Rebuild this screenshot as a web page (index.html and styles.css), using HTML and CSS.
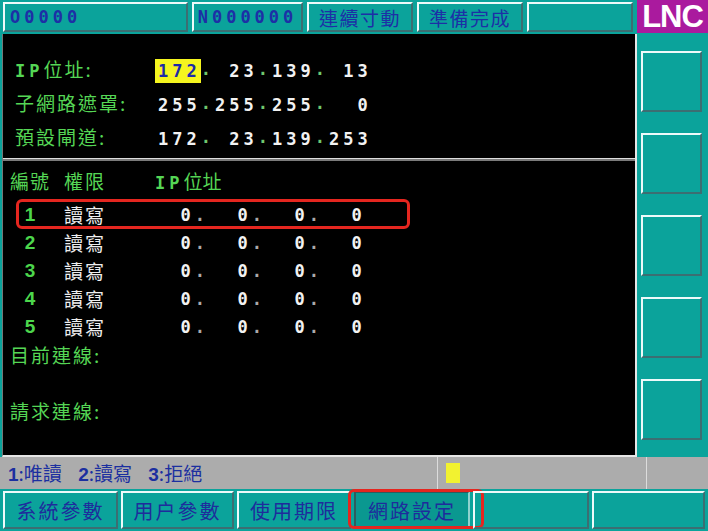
FILE: index.html
```html
<!doctype html>
<html>
<head>
<title>LNC | 網路設定</title>
<link rel="stylesheet" href="styles.css">
</head>
<body>
<div class="screen">
    <header class="topbar">
        <div class="cell cell-prog mono">O0000</div>
        <div class="cell cell-seq mono">N000000</div>
        <div class="cell cell-mode">連續寸動</div>
        <div class="cell cell-mode">準備完成</div>
        <div class="cell cell-mode"></div>
        <div class="logo">LNC</div>
    </header>

    <div class="middle">
        <div class="panel">
            <section class="net">
                <div class="net-row">
                    <span class="label"><b class="ip">IP</b>位址:</span>
                    <span class="addr"><span class="cursor">172</span><i>.</i> 23<i>.</i>139<i>.</i> 13</span>
                </div>
                <div class="net-row">
                    <span class="label">子網路遮罩:</span>
                    <span class="addr">255<i>.</i>255<i>.</i>255<i>.</i>  0</span>
                </div>
                <div class="net-row">
                    <span class="label">預設閘道:</span>
                    <span class="addr">172<i>.</i> 23<i>.</i>139<i>.</i>253</span>
                </div>
            </section>

            <section class="users">
                <div class="users-head">
                    <span class="col-no">編號</span>
                    <span class="col-right">權限</span>
                    <span class="col-ip"><b class="ip">IP</b>位址</span>
                </div>
                <div class="user-list">
                    <div class="user-row marked"><span class="col-no num">1</span><span class="col-right">讀寫</span><span class="col-ip addr">  0<i>.</i>  0<i>.</i>  0<i>.</i>  0</span></div>
                    <div class="user-row"><span class="col-no num">2</span><span class="col-right">讀寫</span><span class="col-ip addr">  0<i>.</i>  0<i>.</i>  0<i>.</i>  0</span></div>
                    <div class="user-row"><span class="col-no num">3</span><span class="col-right">讀寫</span><span class="col-ip addr">  0<i>.</i>  0<i>.</i>  0<i>.</i>  0</span></div>
                    <div class="user-row"><span class="col-no num">4</span><span class="col-right">讀寫</span><span class="col-ip addr">  0<i>.</i>  0<i>.</i>  0<i>.</i>  0</span></div>
                    <div class="user-row"><span class="col-no num">5</span><span class="col-right">讀寫</span><span class="col-ip addr">  0<i>.</i>  0<i>.</i>  0<i>.</i>  0</span></div>
                </div>
                <div class="conn">目前連線:</div>
                <div class="conn conn-req">請求連線:</div>
            </section>
        </div>

        <aside class="side">
            <div class="key"></div>
            <div class="key"></div>
            <div class="key"></div>
            <div class="key"></div>
            <div class="key"></div>
        </aside>
    </div>

    <div class="status">
        <div class="hint">
            <span class="opt"><b>1</b>:唯讀</span>
            <span class="opt"><b>2</b>:讀寫</span>
            <span class="opt"><b>3</b>:拒絕</span>
        </div>
        <div class="input"><span class="caret"></span></div>
        <div class="spare"></div>
    </div>

    <nav class="tabs">
        <div class="tab">系統參數</div>
        <div class="tab">用户參數</div>
        <div class="tab">使用期限</div>
        <div class="tab active marked">網路設定</div>
        <div class="tab"></div>
        <div class="tab"></div>
    </nav>
</div>
</body>
</html>
```

FILE: styles.css
```css
html, body
{
    margin:0;
}
body
{
    width:708px;
    height:531px;
    overflow:hidden;
    background:#0ba39b;
    font-family:"Noto Sans CJK TC", "Noto Sans", sans-serif;
}
.screen
{
    display:flex;
    flex-direction:column;
    height:531px;
}
.mono
{
    font-family:"DejaVu Sans Mono", monospace;
    font-weight:bold;
    font-size:17px;
    letter-spacing:4px;
}

/* top status strip */
.topbar
{
    display:flex;
    gap:4px;
    height:34px;
    padding-left:3px;
}
.cell
{
    box-sizing:border-box;
    height:30px;
    margin:2px 0;
    border:2px solid;
    border-color:#eefafa #3c6e72 #3c6e72 #eefafa;
    display:flex;
    align-items:center;
    justify-content:center;
    color:#1d2fa6;
    font-size:19px;
    letter-spacing:1.5px;
}
.cell-prog
{
    width:185px;
    justify-content:flex-start;
    padding-left:5px;
}
.cell-seq
{
    width:111px;
}
.cell-mode
{
    width:106px;
}
.cell.mono
{
    font-size:17px;
    letter-spacing:4px;
}
.logo
{
    width:71px;
    height:33px;
    background:#aa1a9e;
    color:#fff;
    font:bold 31px/33px "Liberation Sans", sans-serif;
    letter-spacing:-1px;
    text-align:center;
}

/* main area */
.middle
{
    display:flex;
    height:423px;
}
.panel
{
    box-sizing:border-box;
    width:635px;
    margin-left:2px;
    background:#000;
    border-left:1px solid #777;
    border-right:2px solid #e6e6e6;
    border-bottom:2px solid #e6e6e6;
    display:flex;
    flex-direction:column;
}
.side
{
    flex:1;
    display:flex;
    flex-direction:column;
    gap:21px;
    padding:17px 0 0 4px;
}
.key
{
    box-sizing:border-box;
    width:61px;
    height:61px;
    border:2px solid;
    border-color:#eefafa #3c6e72 #3c6e72 #eefafa;
}

.addr
{
    font-family:"DejaVu Sans Mono", monospace;
    font-weight:bold;
    font-size:17px;
    letter-spacing:4px;
    color:#f2f2f2;
    white-space:pre;
}
.addr i
{
    font-style:normal;
    color:#b8d8b8;
}
.ip
{
    font-family:"DejaVu Sans Mono", monospace;
    font-size:17px;
    letter-spacing:4px;
}

/* network settings */
.net
{
    box-sizing:border-box;
    height:125px;
    padding-top:18px;
    border-bottom:1px solid #ddd;
}
.net-row
{
    display:grid;
    grid-template-columns:155px auto;
    height:34px;
    line-height:34px;
}
.label
{
    padding-left:12px;
    color:#55d655;
    font-size:19px;
    letter-spacing:2px;
}
.cursor
{
    background:#f5f51e;
    color:#1c2aa8;
    padding:2px 0 2px 3px;
    margin-left:-3px;
}
.net .addr i
{
    vertical-align:2px;
    color:#6fc86f;
}

/* user table */
.users
{
    flex:1;
    border-top:2px solid #7a7a7a;
    padding-top:6px;
    line-height:28px;
    font-size:19px;
}
.users-head, .user-row
{
    display:flex;
    height:28px;
}
.users-head
{
    color:#55d655;
    letter-spacing:1px;
}
.user-list
{
    margin-top:6px;
}
.user-row
{
    position:relative;
    color:#eee;
}
.col-no
{
    width:40px;
    margin-left:7px;
    text-align:center;
}
.col-right
{
    width:88px;
    margin-left:14px;
    letter-spacing:2px;
}
.users-head .col-ip
{
    padding-left:3px;
    letter-spacing:0;
}
.num
{
    font:bold 19px/28px "Liberation Sans", sans-serif;
    color:#4cd64c;
}
.user-row .addr i
{
    color:#aaa;
}
.user-row.marked::after
{
    content:"";
    position:absolute;
    left:13px;
    top:-2px;
    width:394px;
    height:30px;
    box-sizing:border-box;
    border:3px solid #e5261f;
    border-radius:6px;
}
.conn
{
    margin-left:7px;
    color:#55d655;
    letter-spacing:2px;
}
.conn-req
{
    margin-top:28px;
}

/* prompt line */
.status
{
    display:flex;
    height:32px;
    background:#acacac;
}
.hint
{
    box-sizing:border-box;
    width:438px;
    padding-left:8px;
    border-right:1px solid #dcdcdc;
    color:#1b2fa0;
    font-size:19px;
    line-height:32px;
    white-space:nowrap;
}
.hint b
{
    font-family:"Liberation Sans", sans-serif;
}
.opt
{
    margin-right:12px;
}
.input
{
    box-sizing:border-box;
    width:209px;
    padding:6px 0 0 8px;
    border-right:1px solid #dcdcdc;
}
.caret
{
    display:block;
    width:14px;
    height:20px;
    background:#f2f230;
}
.spare
{
    flex:1;
}

/* soft keys */
.tabs
{
    display:flex;
    gap:3px;
    height:42px;
    padding:2px 3px 0;
    box-sizing:border-box;
}
.tab
{
    position:relative;
    box-sizing:border-box;
    width:115px;
    height:38px;
    border:2px solid;
    border-color:#eefafa #3c6e72 #3c6e72 #eefafa;
    display:flex;
    align-items:center;
    justify-content:center;
    color:#1e2c9c;
    font-size:20px;
    letter-spacing:2px;
}
.tab:nth-child(2) { width:113px; }
.tab:nth-child(3) { width:114px; }
.tab:nth-child(4), .tab:nth-child(5) { width:116px; }
.tab:nth-child(6) { width:113px; }
.tab.active
{
    border-color:#2f5c5e #8fd2ce #8fd2ce #2f5c5e;
    background:#0a9890;
}
.tab.marked::after
{
    content:"";
    position:absolute;
    left:-8px;
    top:-4px;
    right:-16px;
    bottom:-2px;
    border:3px solid #e5261f;
    border-radius:6px;
}
```
